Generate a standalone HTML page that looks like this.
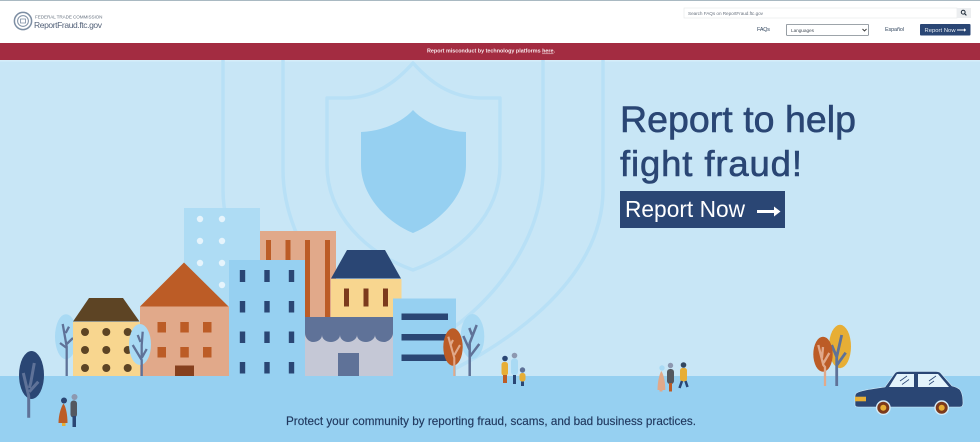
<!DOCTYPE html>
<html lang="en">
<head>
<meta charset="utf-8">
<title>ReportFraud.ftc.gov</title>
<style>
html,body{margin:0;padding:0;background:#fff;width:980px;height:442px;overflow:hidden}
svg{display:block;font-family:"Liberation Sans",sans-serif}
</style>
</head>
<body>
<svg width="980" height="442" viewBox="0 0 980 442" xmlns="http://www.w3.org/2000/svg">
<!-- header -->
<rect width="980" height="43" fill="#fff"/>
<rect width="980" height="1" fill="#a9b9c2"/>
<g fill="none" stroke="#7d8ea3">
<circle cx="23" cy="21" r="8.600" stroke-width="1.500"/>
<circle cx="23" cy="21" r="5.400" stroke-width="1"/>
<path d="M20.500 19h5v4h-5z" stroke-width=".8"/>
</g>
<text x="35" y="18.500" font-size="4.600" fill="#6a7583" textLength="67.500">FEDERAL TRADE COMMISSION</text>
<text x="34" y="27.800" font-size="8.500" fill="#55637a" textLength="68">ReportFraud.ftc.gov</text>

<rect x="684" y="8" width="273" height="10" fill="#fff" stroke="#e4e6e8" stroke-width=".6"/>
<rect x="957" y="8" width="14" height="10" fill="#eceef0"/>
<circle cx="963.200" cy="12.200" r="1.900" fill="none" stroke="#1c2836" stroke-width="1"/>
<path d="M964.600 13.600l1.800 1.800" stroke="#1c2836" stroke-width="1.100"/>
<text x="688" y="14.800" font-size="4.700" fill="#6b7480" textLength="75">Search FAQs on ReportFraud.ftc.gov</text>
<text x="757" y="31.200" font-size="5.400" fill="#33475f" textLength="13">FAQs</text>
<rect x="786.400" y="24.400" width="82.200" height="11" rx="1" fill="#fff" stroke="#7d858e" stroke-width=".8"/>
<text x="791" y="32" font-size="4.800" fill="#4a525c" textLength="23">Languages</text>
<path d="M862.500 29l2 2 2-2" fill="none" stroke="#333" stroke-width=".9"/>
<text x="885" y="30.800" font-size="5.400" fill="#33475f" textLength="19">Español</text>
<rect x="920" y="24" width="50.500" height="11.500" rx="1" fill="#2a4674"/>
<text x="924.500" y="31.800" font-size="5.800" fill="#e8edf3" textLength="31">Report Now</text>
<path d="M957 30h7.500" stroke="#fff" stroke-width="1"/>
<path d="M964 28.300l2.200 1.700-2.200 1.700z" fill="#fff"/>

<!-- banner -->
<rect y="43" width="980" height="17" fill="#a32c41"/>
<text x="427" y="52.500" font-size="5.400" font-weight="700" fill="#f7e9ec" textLength="128">Report misconduct by technology platforms <tspan text-decoration="underline">here</tspan>.</text>

<!-- sky -->
<rect y="60" width="980" height="316" fill="#c8e6f6"/>
<rect y="60" width="980" height="1.500" fill="#d6edf9"/>

<!-- shields -->
<g fill="none" stroke="#b8e0f6" stroke-width="3.500">
<path d="M223 60V190C223 280 320 350 413 388C506 350 603 280 603 190V60"/>
<path d="M283 60V170C283 250 350 325 413 350C476 325 543 250 543 170V60"/>
<path d="M413 63C430 82 450 97 480 98H500V165C500 215 460 253 413 270C366 253 327 215 327 165V98H347C376 97 396 82 413 63Z" stroke-linejoin="round"/>
</g>
<path d="M413 110C425 123 445 131 466 132V165C466 195 440 222 413 233C386 222 361 195 361 165V132C382 131 401 123 413 110Z" fill="#96d0f1"/>

<!-- back blue building -->
<rect x="184" y="208" width="76" height="100" fill="#aedcf4"/>
<g fill="#e6f4fc">
<circle cx="200" cy="219" r="3.200"/><circle cx="222" cy="219" r="3.200"/>
<circle cx="200" cy="241" r="3.200"/><circle cx="222" cy="241" r="3.200"/>
<circle cx="200" cy="263" r="3.200"/><circle cx="222" cy="263" r="3.200"/>
<circle cx="222" cy="285" r="3.200"/>
</g>

<!-- tall orange building -->
<rect x="260" y="231" width="76" height="87" fill="#e1a98a"/>
<g fill="#bc5c26">
<rect x="266" y="240" width="5" height="78"/><rect x="285.500" y="240" width="5" height="78"/>
<rect x="305" y="240" width="5" height="78"/><rect x="325" y="240" width="5" height="78"/>
</g>

<!-- blue building -->
<rect x="229" y="260" width="76" height="116" fill="#96d0f1"/>
<g fill="#2a4674">
<rect x="239.800" y="270" width="5.400" height="12"/><rect x="264.300" y="270" width="5.400" height="12"/><rect x="288.800" y="270" width="5.400" height="12"/>
<rect x="239.800" y="301" width="5.400" height="11.500"/><rect x="264.300" y="301" width="5.400" height="11.500"/><rect x="288.800" y="301" width="5.400" height="11.500"/>
<rect x="239.800" y="331.500" width="5.400" height="11.500"/><rect x="264.300" y="331.500" width="5.400" height="11.500"/><rect x="288.800" y="331.500" width="5.400" height="11.500"/>
<rect x="239.800" y="362" width="5.400" height="11.500"/><rect x="264.300" y="362" width="5.400" height="11.500"/><rect x="288.800" y="362" width="5.400" height="11.500"/>
</g>

<!-- navy roof house -->
<path d="M347 250H385L401 278.500H331Z" fill="#2a4674"/>
<rect x="331" y="279" width="70.500" height="39" fill="#f8d68f"/>
<g fill="#7c3a1c">
<rect x="344" y="288.500" width="5" height="18"/><rect x="363.500" y="288.500" width="5" height="18"/><rect x="383" y="288.500" width="5" height="18"/>
</g>

<!-- shop -->
<rect x="305" y="317" width="88" height="59" fill="#c5c8d6"/>
<path d="M305 317H393V333C393 338 388 342 384 342C379 342 375 339 375 335C375 339 370 342 366 342C361 342 357 339 357 335C357 339 352 342 348 342C344 342 340 339 340 335C340 339 335 342 331 342C326 342 322 339 322 335C322 339 318 342 313 342C309 342 305 338 305 333Z" fill="#5f7298"/>
<rect x="338" y="353" width="21" height="23" fill="#5f7298"/>

<!-- right blue building -->
<rect x="393" y="298.500" width="63" height="78" fill="#96d0f1"/>
<g fill="#2a4674">
<rect x="401.500" y="313.500" width="46.500" height="6.500"/>
<rect x="401.500" y="334" width="46.500" height="6.500"/>
<rect x="401.500" y="354.500" width="46.500" height="6.500"/>
</g>

<!-- trees centre -->
<ellipse cx="472.500" cy="336.500" rx="11.800" ry="22.500" fill="#a9daf4"/>
<path d="M469.700 376V343L476.700 325M469.700 350L463.300 336M469.700 356.700L479.300 344M472 335L469.300 328" stroke="#5f7298" stroke-width="2.500" fill="none"/>
<ellipse cx="453" cy="347" rx="9.700" ry="18.700" fill="#bc5c26"/>
<path d="M454.300 376V358L448.300 336.700M454.300 355L460 345M450.500 345L453 340" stroke="#e1a98a" stroke-width="2.100" fill="none"/>

<!-- left house -->
<ellipse cx="66" cy="336.700" rx="11" ry="22.500" fill="#a9daf4"/>
<path d="M66.700 376V346.700L62.700 324M66.700 348L60 343M65.700 333L69 326.700M66.700 344L73 338" stroke="#5f7298" stroke-width="2.300" fill="none"/>
<path d="M89 298H123L139.500 321.500H73Z" fill="#5d4424"/>
<rect x="73" y="322" width="67.500" height="54" fill="#f8d68f"/>
<g fill="#5d4424">
<circle cx="85" cy="332" r="4"/><circle cx="106.300" cy="332" r="4"/><circle cx="127.700" cy="332" r="4"/>
<circle cx="85" cy="350" r="4"/><circle cx="106.300" cy="350" r="4"/><circle cx="127.700" cy="350" r="4"/>
<circle cx="85" cy="368" r="4"/><circle cx="106.300" cy="368" r="4"/><circle cx="127.700" cy="368" r="4"/>
</g>

<!-- big orange house -->
<path d="M184 262.500L228.500 306.500H140Z" fill="#bc5c26"/>
<rect x="140" y="306.500" width="89" height="69.500" fill="#e1a98a"/>
<g fill="#bc5c26">
<rect x="157.500" y="322" width="8.500" height="10.500"/><rect x="180.300" y="322" width="8.500" height="10.500"/><rect x="203" y="322" width="8.500" height="10.500"/>
<rect x="157.500" y="347" width="8.500" height="10.500"/><rect x="180.300" y="347" width="8.500" height="10.500"/><rect x="203" y="347" width="8.500" height="10.500"/>
</g>
<rect x="175" y="365.500" width="19" height="10.500" fill="#86401e"/>

<!-- tree front of left house -->
<ellipse cx="140" cy="344.500" rx="11" ry="20.500" fill="#a9daf4"/>
<path d="M141.700 376V360L132.700 345M141.700 358L146.700 349M141.700 358V345L142.700 331.700M140.500 342L137.700 335" stroke="#5f7298" stroke-width="2.300" fill="none"/>

<!-- ground -->
<rect y="376" width="980" height="66" fill="#96d0f1"/>

<!-- navy tree -->
<ellipse cx="31.500" cy="375" rx="12.500" ry="24" fill="#2a4674"/>
<path d="M28.700 417.700V396L23.300 373M29.300 391.700L38.300 381.700M29.300 388L30.700 383L34.300 363" stroke="#5f7298" stroke-width="3" fill="none"/>

<!-- left people -->
<circle cx="64" cy="400.500" r="3" fill="#2a4674"/>
<path d="M63.500 403.500C66 407 67.500 415 67.500 423H58.500C58.500 415 61 407 63.500 403.500Z" fill="#bc5c26"/>
<rect x="62" y="423" width="3.500" height="3" fill="#e7ae35"/>
<circle cx="74.500" cy="397" r="3" fill="#8d98b0"/>
<rect x="70.500" y="400.500" width="6.500" height="17" rx="3" fill="#54585f"/>
<rect x="72.500" y="416" width="3.500" height="11" fill="#2a4674"/>

<!-- centre people -->
<circle cx="505" cy="358.500" r="2.800" fill="#2a4674"/>
<rect x="501.500" y="362" width="6.500" height="13.500" rx="2.500" fill="#e7ae35"/>
<rect x="503" y="375" width="4" height="8" fill="#bc5c26"/>
<circle cx="514.500" cy="355.500" r="2.800" fill="#8d98b0"/>
<rect x="511" y="358.500" width="7" height="16.500" rx="3" fill="#a9daf4"/>
<rect x="513" y="375" width="3" height="9" fill="#2a4674"/>
<circle cx="522.500" cy="370" r="2.700" fill="#5f7298"/>
<rect x="519.500" y="373" width="6" height="8.500" rx="2.500" fill="#e7ae35"/>
<rect x="521" y="381.500" width="3" height="4.500" fill="#2a4674"/>

<!-- right people -->
<circle cx="662" cy="368" r="2.700" fill="#a9daf4"/>
<path d="M661.300 371C664 375 665.300 383 665.300 390H657.500C657.500 383 659 375 661.300 371Z" fill="#e1a98a"/>
<rect x="659.500" y="390" width="3" height="1.500" fill="#e1a98a"/>
<circle cx="670.500" cy="365.500" r="2.700" fill="#8d98b0"/>
<rect x="667" y="369" width="7" height="15" rx="3" fill="#54585f"/>
<rect x="669" y="383" width="3" height="8.500" fill="#bc5c26"/>
<circle cx="683.500" cy="365" r="2.800" fill="#33475f"/>
<rect x="680" y="368" width="7" height="13.500" rx="2.500" fill="#e7ae35"/>
<path d="M682 381L679.500 388M685.500 381L687.500 387" stroke="#2a4674" stroke-width="2.500" fill="none"/>

<!-- right trees -->
<ellipse cx="840" cy="346.500" rx="11" ry="21.700" fill="#e7ae35"/>
<path d="M836.700 386V357L841.700 335M837 365L845.700 352.700M836.700 357L831.700 345" stroke="#5f7298" stroke-width="2.800" fill="none"/>
<ellipse cx="823" cy="354.200" rx="9.700" ry="17.500" fill="#bc5c26"/>
<path d="M825 386V367L823.300 365L818.300 345M823.500 363L829.300 353M822 358L823 347" stroke="#e1a98a" stroke-width="2.300" fill="none"/>

<!-- car -->
<path d="M855 405V396C855 393 858 392 860 391.500C868 389 878 388 885 387L895 373C896 372 897 371.500 899 371.500H936C938 371.500 940 372 941 373.500L952 386C956 387 959 388 960.500 390.500C962 393 963 397 963 403C963 405.500 962 407 960 407H860C857 407 855 407 855 405Z" fill="#2a4674" stroke="#d6edf9" stroke-width=".6"/>
<path d="M889 387L897 374H914V387ZM918 374H938L949 387H918Z" fill="#e3f3fb"/>
<path d="M900 381L907 376M902 384.500L909 379.500M929 381L936 376M929 384.500L934 381" stroke="#2a4674" stroke-width=".8"/>
<rect x="855" y="396.700" width="11" height="4.600" fill="#e7ae35"/>
<circle cx="883.300" cy="407.700" r="7.400" fill="#d6edf9"/>
<circle cx="883.300" cy="407.700" r="6" fill="#7c3a1c"/>
<circle cx="883.300" cy="407.700" r="3" fill="#e7ae35"/>
<circle cx="941.700" cy="407.700" r="7.400" fill="#d6edf9"/>
<circle cx="941.700" cy="407.700" r="6" fill="#7c3a1c"/>
<circle cx="941.700" cy="407.700" r="3" fill="#e7ae35"/>

<!-- hero text -->
<text x="620" y="132" font-size="37.500" fill="#2a4674" stroke="#2a4674" stroke-width=".6" textLength="236">Report to help</text>
<text x="620" y="176" font-size="36.500" fill="#2a4674" stroke="#2a4674" stroke-width=".6" textLength="182">fight fraud!</text>
<rect x="620" y="191" width="165" height="37" fill="#2a4674"/>
<text x="625" y="217" font-size="22.700" fill="#fff" textLength="120">Report Now</text>
<path d="M757 211.500H775" stroke="#fff" stroke-width="3"/>
<path d="M774 206.500L780.500 211.500L774 216.500Z" fill="#fff"/>

<!-- tagline -->
<text x="286" y="425" font-size="11.700" fill="#21395f" stroke="#21395f" stroke-width=".15" textLength="410">Protect your community by reporting fraud, scams, and bad business practices.</text>
</svg>
</body>
</html>
